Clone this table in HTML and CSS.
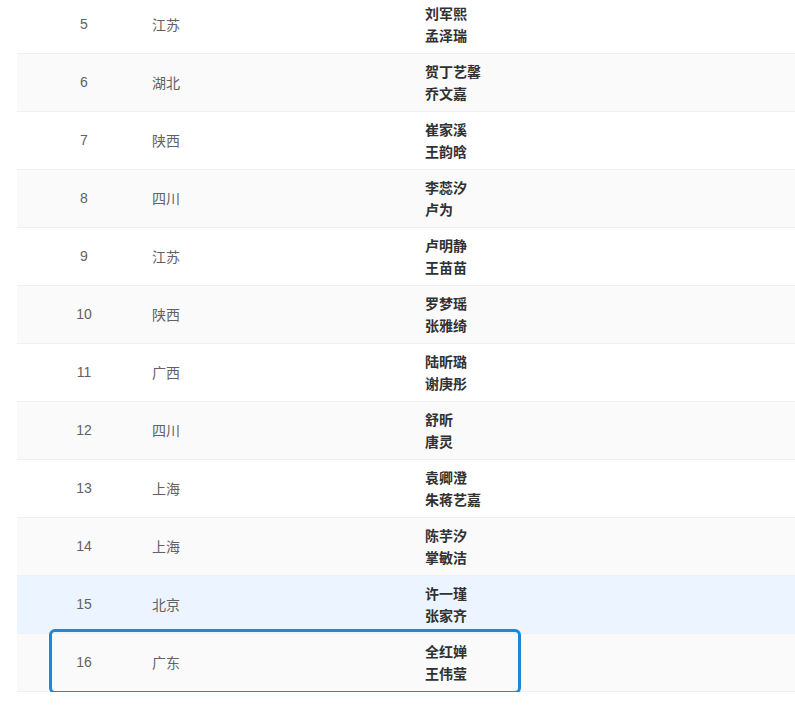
FILE: index.html
```html
<!DOCTYPE html>
<html lang="zh">
<head>
<meta charset="utf-8">
<link rel="stylesheet" href="styles.css">
</head>
<body>
<div class="table">
  <div class="row"><div class="c-idx">5</div><div class="c-prov">江苏</div><div class="c-names"><span>刘军熙</span><span>孟泽瑞</span></div></div>
  <div class="row stripe"><div class="c-idx">6</div><div class="c-prov">湖北</div><div class="c-names"><span>贺丁艺馨</span><span>乔文嘉</span></div></div>
  <div class="row"><div class="c-idx">7</div><div class="c-prov">陕西</div><div class="c-names"><span>崔家溪</span><span>王韵晗</span></div></div>
  <div class="row stripe"><div class="c-idx">8</div><div class="c-prov">四川</div><div class="c-names"><span>李蕊汐</span><span>卢为</span></div></div>
  <div class="row"><div class="c-idx">9</div><div class="c-prov">江苏</div><div class="c-names"><span>卢明静</span><span>王苗苗</span></div></div>
  <div class="row stripe"><div class="c-idx">10</div><div class="c-prov">陕西</div><div class="c-names"><span>罗梦瑶</span><span>张雅绮</span></div></div>
  <div class="row"><div class="c-idx">11</div><div class="c-prov">广西</div><div class="c-names"><span>陆昕璐</span><span>谢庚彤</span></div></div>
  <div class="row stripe"><div class="c-idx">12</div><div class="c-prov">四川</div><div class="c-names"><span>舒昕</span><span>唐灵</span></div></div>
  <div class="row"><div class="c-idx">13</div><div class="c-prov">上海</div><div class="c-names"><span>袁卿澄</span><span>朱蒋艺嘉</span></div></div>
  <div class="row stripe"><div class="c-idx">14</div><div class="c-prov">上海</div><div class="c-names"><span>陈芋汐</span><span>掌敏洁</span></div></div>
  <div class="row hover"><div class="c-idx">15</div><div class="c-prov">北京</div><div class="c-names"><span>许一瑾</span><span>张家齐</span></div></div>
  <div class="row stripe marked"><div class="c-idx">16</div><div class="c-prov">广东</div><div class="c-names"><span>全红婵</span><span>王伟莹</span></div><div class="highlight"></div></div>
</div>
</body>
</html>
```
FILE: styles.css
```css
html, body {
  margin: 0;
  padding: 0;
  background: #ffffff;
  overflow: hidden;
}
body {
  font-family: "Liberation Sans", "Noto Sans CJK SC", sans-serif;
  font-size: 14px;
  color: #606266;
}
.table {
  margin-top: -4px;
  margin-left: 17px;
}
.row {
  display: grid;
  grid-template-columns: 134px 274px 1fr;
  align-items: center;
  height: 58px;
  padding-bottom: 2px;
  box-sizing: border-box;
  border-bottom: 1px solid #eef0f5;
}
.stripe {
  background: #fafafa;
}
.hover {
  background: #ecf5ff;
}
.marked {
  position: relative;
}
.c-idx {
  text-align: center;
}
.c-prov {
  padding-left: 1px;
}
.c-names {
  display: flex;
  flex-direction: column;
  line-height: 22px;
  color: #303133;
  font-weight: 700;
  font-family: "Noto Sans CJK SC", sans-serif;
  font-size: 14px;
}
.highlight {
  position: absolute;
  left: 32px;
  top: -5px;
  width: 472px;
  height: 65px;
  box-sizing: border-box;
  border: 3px solid #1e88d8;
  border-radius: 6px;
}
```
